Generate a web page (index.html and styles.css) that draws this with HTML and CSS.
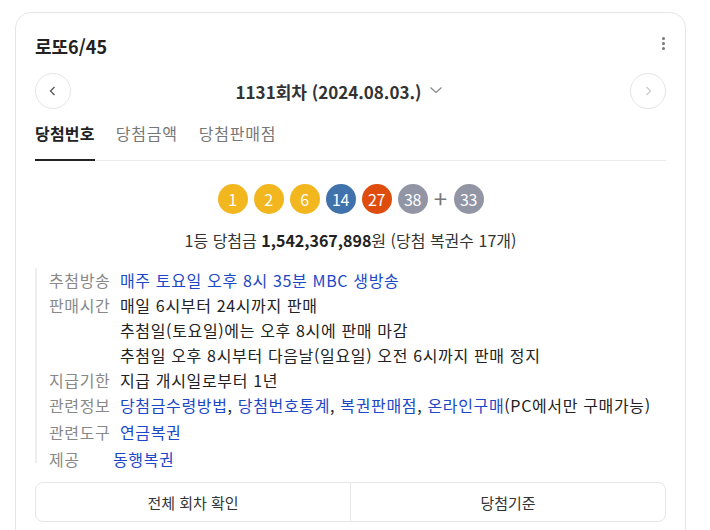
FILE: index.html
```html
<!DOCTYPE html>
<html lang="ko">
<head>
<meta charset="utf-8">
<title>로또6/45</title>
<link rel="stylesheet" href="styles.css">
</head>
<body>
<div class="card">
  <div class="head">
    <h1 class="title">로또6/45</h1>
    <span class="kebab"><i></i><i></i><i></i></span>
  </div>
  <div class="nav">
    <button class="circle">
      <svg width="12" height="12" viewBox="0 0 12 12"><path d="M7.5 2 L3.5 6 L7.5 10" fill="none" stroke="#555" stroke-width="1.3"/></svg>
    </button>
    <div class="round">
      <span class="round-text">1131회차 (2024.08.03.)</span>
      <svg class="chev" width="14" height="10" viewBox="0 0 14 10"><path d="M1.5 2.5 L7 7.5 L12.5 2.5" fill="none" stroke="#888" stroke-width="1.2"/></svg>
    </div>
    <button class="circle off">
      <svg width="12" height="12" viewBox="0 0 12 12"><path d="M4.5 2 L8.5 6 L4.5 10" fill="none" stroke="#ccc" stroke-width="1.3"/></svg>
    </button>
  </div>
  <div class="tabs">
    <span class="tab active">당첨번호</span>
    <span class="tab">당첨금액</span>
    <span class="tab">당첨판매점</span>
  </div>
  <div class="balls">
    <span class="ball y">1</span>
    <span class="ball y">2</span>
    <span class="ball y">6</span>
    <span class="ball b">14</span>
    <span class="ball r">27</span>
    <span class="ball g">38</span>
    <span class="plus">+</span>
    <span class="ball g">33</span>
  </div>
  <p class="prize">1등 당첨금 <strong>1,542,367,898</strong>원 (당첨 복권수 17개)</p>
  <dl class="info">
    <div class="row"><dt>추첨방송</dt><dd><a>매주 토요일 오후 8시 35분 MBC 생방송</a></dd></div>
    <div class="row"><dt>판매시간</dt><dd>매일 6시부터 24시까지 판매<br>추첨일(토요일)에는 오후 8시에 판매 마감<br>추첨일 오후 8시부터 다음날(일요일) 오전 6시까지 판매 정지</dd></div>
    <div class="row"><dt>지급기한</dt><dd>지급 개시일로부터 1년</dd></div>
    <div class="row"><dt>관련정보</dt><dd><a>당첨금수령방법</a>, <a>당첨번호통계</a>, <a>복권판매점</a>, <a>온라인구매</a>(PC에서만 구매가능)</dd></div>
    <div class="row tall"><dt>관련도구</dt><dd><a>연금복권</a></dd></div>
    <div class="row tall"><dt class="short">제공</dt><dd><a>동행복권</a></dd></div>
  </dl>
  <div class="buttons">
    <button class="btn">전체 회차 확인</button>
    <button class="btn">당첨기준</button>
  </div>
</div>
</body>
</html>
```
FILE: styles.css
```css
* { box-sizing: border-box; }
body {
  margin: 0;
  background: #fff;
  font-family: "Noto Sans CJK KR", "Noto Sans", sans-serif;
  color: #222;
  overflow: hidden;
}
.card {
  margin: 12px 0 0 15px;
  width: 671px;
  height: 560px;
  border: 1px solid #e6e6e6;
  border-radius: 16px;
  padding: 0 19px;
}
.head {
  display: flex;
  justify-content: space-between;
  align-items: center;
  padding-top: 19px;
  height: 46px;
}
.title {
  margin: 0;
  font-size: 18px;
  font-weight: 700;
  line-height: 26px;
}
.kebab {
  display: flex;
  flex-direction: column;
  gap: 2px;
  margin-right: 1px;
  margin-top: -4px;
}
.kebab i {
  display: block;
  width: 3px;
  height: 3px;
  border-radius: 50%;
  background: #777;
}
.nav {
  display: flex;
  align-items: center;
  justify-content: space-between;
  margin-top: 14px;
  height: 36px;
}
.circle {
  width: 36px;
  height: 36px;
  border-radius: 50%;
  border: 1px solid #e5e5e5;
  background: #fff;
  display: flex;
  align-items: center;
  justify-content: center;
  padding: 0;
}
.round {
  display: flex;
  align-items: center;
  gap: 8px;
  margin-left: -22px;
}
.round-text {
  font-size: 17px;
  font-weight: 700;
  color: #333;
}
.chev { margin-top: -2px; }
.tabs {
  display: flex;
  gap: 21px;
  margin-top: 10px;
  height: 42px;
  border-bottom: 1px solid #ebebeb;
}
.tab {
  font-size: 16px;
  color: #777;
  line-height: 28px;
  letter-spacing: 0.8px;
}
.tab.active {
  color: #222;
  font-weight: 700;
  border-bottom: 2px solid #222;
  height: 42px;
  letter-spacing: 0.2px;
}
.balls {
  display: flex;
  justify-content: center;
  align-items: center;
  gap: 6px;
  margin-top: 23px;
}
.ball {
  width: 30px;
  height: 30px;
  border-radius: 50%;
  color: #fff;
  font-size: 16px;
  display: flex;
  align-items: center;
  justify-content: center;
  letter-spacing: -0.3px;
}
.ball.y { background: #f2b61f; }
.ball.b { background: #4072ac; }
.ball.r { background: #de4c0e; }
.ball.g { background: #9195a4; }
.plus {
  color: #777;
  font-size: 24px;
  line-height: 30px;
  width: 14px;
  text-align: center;
  margin-top: -2px;
}
.prize {
  margin: 15px 0 0;
  text-align: center;
  font-size: 16px;
  line-height: 22px;
  color: #333;
}
.prize strong { color: #222; }
.info {
  position: relative;
  margin: 17px 0 0;
  padding: 0 0 0 14px;
  font-size: 16px;
  line-height: 25px;
  letter-spacing: 0.65px;
}
.info::before {
  content: "";
  position: absolute;
  left: 0;
  top: 0;
  bottom: 9px;
  width: 2px;
  background: #eeeeee;
}
.row { display: flex; }
.row.tall { margin-top: 2px; }
.row dt {
  width: 71px;
  flex: none;
  color: #888;
}
.row dt.short { width: 64px; }
.row dd {
  margin: 0;
  color: #222;
}
.row a { color: #1c47c6; }
.buttons {
  display: flex;
  margin-top: 10px;
  height: 40px;
  border: 1px solid #e6e6e6;
  border-radius: 8px;
}
.btn {
  flex: 1;
  border: 0;
  background: transparent;
  font-family: inherit;
  font-size: 15px;
  color: #333;
}
.btn + .btn { border-left: 1px solid #e6e6e6; }
```
